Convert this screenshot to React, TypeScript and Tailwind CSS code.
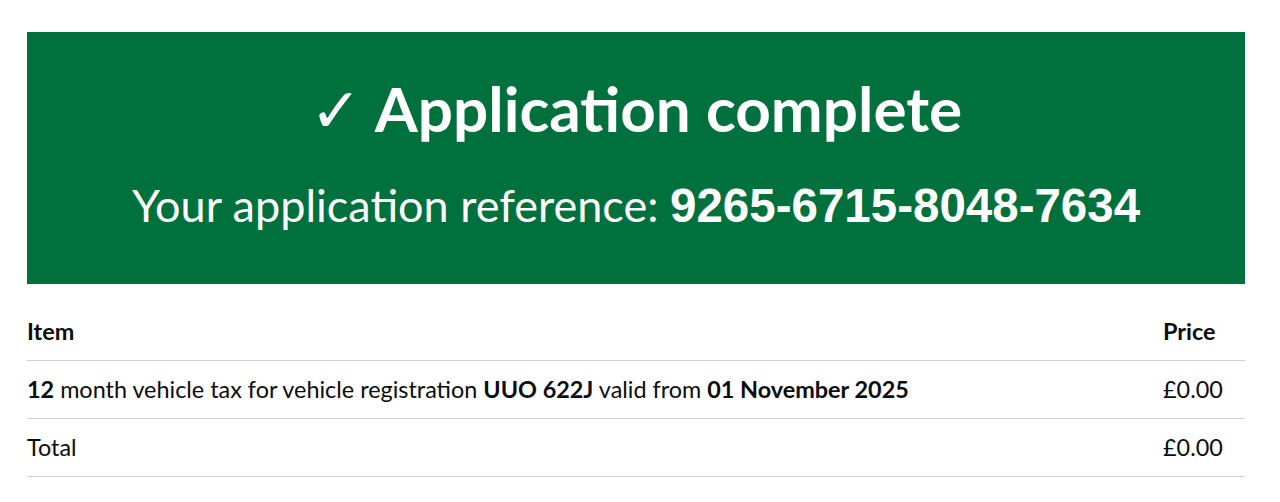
export default function App() {
  return (
    <div className="min-h-[502px] bg-white pl-[27px] pr-[35px] pt-[32px] font-['Lato','Noto_Sans',sans-serif] text-[#0b0c0c]">
      {/* Confirmation panel */}
      <div className="flex h-[252px] flex-col items-center bg-[#00703c] pt-[45px] text-center text-white">
        <h1 className="text-[62px] font-bold leading-[62px]">
          <span className="font-normal">✓</span> Application complete
        </h1>
        <p className="mt-[41px] text-[45px] leading-[50px]">
          Your application reference:{" "}
          <strong className="font-['Liberation_Sans',Arial,sans-serif] text-[47.5px] font-bold">9265-6715-8048-7634</strong>
        </p>
      </div>

      {/* Summary table */}
      <div className="mt-[19px] grid grid-cols-[1fr_82px] text-[23.4px] leading-[31px]">
        <div className="border-b border-[#cfd1d2] py-[13px] font-bold">Item</div>
        <div className="border-b border-[#cfd1d2] py-[13px] font-bold">Price</div>
        <div className="border-b border-[#cfd1d2] py-[13px]">
          <strong>12</strong> month vehicle tax for vehicle registration <strong>UUO 622J</strong> valid from{" "}
          <strong>01 November 2025</strong>
        </div>
        <div className="border-b border-[#cfd1d2] py-[13px]">£0.00</div>
        <div className="border-b border-[#cfd1d2] py-[13px]">Total</div>
        <div className="border-b border-[#cfd1d2] py-[13px]">£0.00</div>
      </div>
    </div>
  );
}
